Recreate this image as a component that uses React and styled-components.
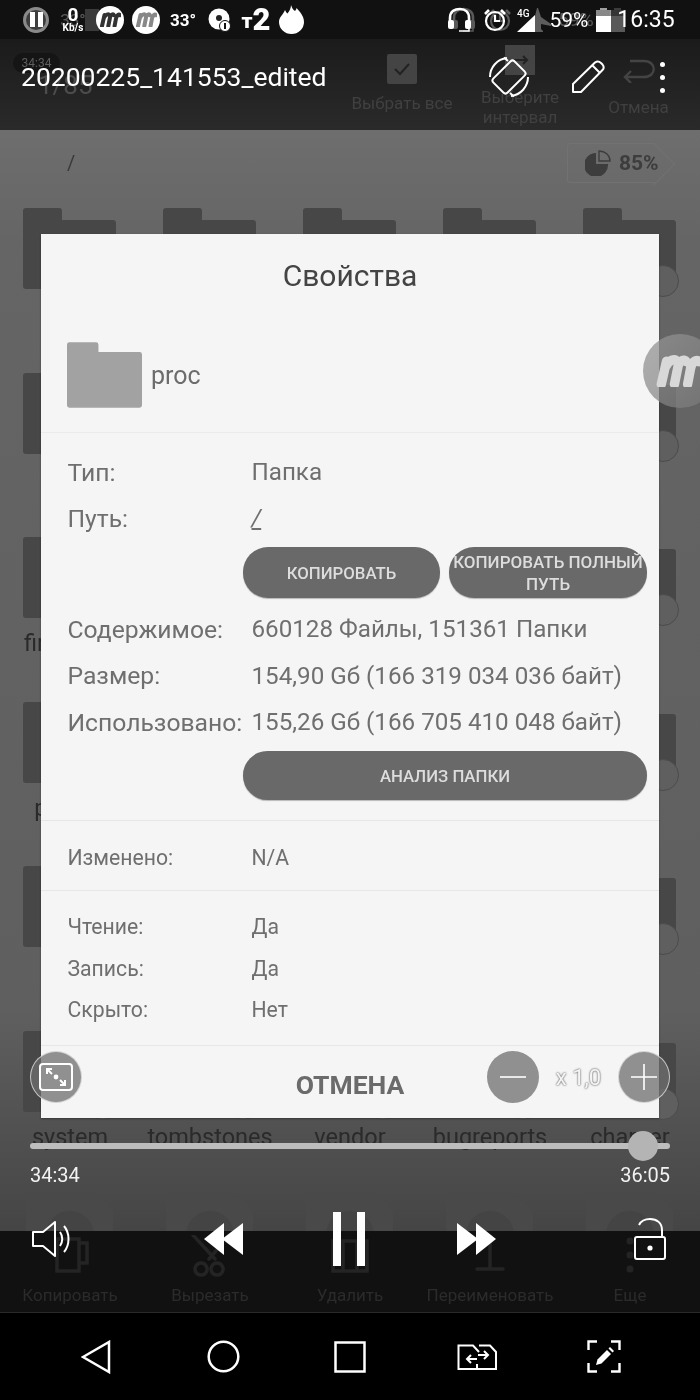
import React from 'react';
import styled, { createGlobalStyle } from 'styled-components';

const GlobalStyle = createGlobalStyle`
  html, body { margin: 0; padding: 0; background: #000; }
  body { font-family: Roboto, "Liberation Sans", sans-serif; }
  * { box-sizing: border-box; }
`;

const Screen = styled.div`
  position: relative;
  width: 700px;
  height: 1400px;
  overflow: hidden;
  display: flex;
  flex-direction: column;
  background: #000;
  filter: blur(0.45px);
`;

/* ---------- status bar ---------- */
const StatusBar = styled.div`
  height: 39px;
  flex: none;
  display: flex;
  align-items: center;
  background: #111;
  color: #fff;
`;

const GhostStatusItem = styled.div`
  width: ${p => p.$w}px;
  margin-left: ${p => p.$gap}px;
  flex: none;
  display: flex;
  justify-content: center;
  align-items: center;
  font-size: ${p => p.$size || 17}px;
  white-space: nowrap;
  opacity: ${p => p.$dim || 0.3};
`;

const GhostSquare = styled.div`
  width: 14px;
  height: 22px;
  background: #9a9a9a;
`;

/* ---------- file manager behind the dialog ---------- */
const AppToolbar = styled.div`
  height: 91px;
  flex: none;
  position: relative;
  display: flex;
  background: linear-gradient(#1b1b1b, #2a2a2a);
`;

const GhostCounter = styled.div`
  width: 345px;
  padding: 14px 0 0 13px;
  flex: none;
`;

const GhostPill = styled.div`
  width: 47px;
  height: 20px;
  border-radius: 10px;
  background: #151515;
  color: #5d5d5d;
  font-size: 12px;
  line-height: 20px;
  text-align: center;
`;

const GhostCount = styled.div`
  margin: 0 0 0 25px;
  font-size: 26px;
  line-height: 30px;
  color: #4c4c4c;
  transform: translateY(-3px);
`;

const GhostAction = styled.div`
  width: ${p => p.$w}px;
  flex: none;
  display: flex;
  flex-direction: column;
  align-items: center;
  padding-top: ${p => p.$top}px;
  font-size: 17px;
  line-height: 20px;
  text-align: center;
  color: #404040;
`;

const GhostCaption = styled.div`
  margin-top: ${p => p.$top}px;
`;

const Content = styled.div`
  flex: none;
  height: 1101px;
  overflow: hidden;
  background: linear-gradient(#6e6e6e 0, #656565 10%, #5f5f5f 80%, #454545 100%);
`;

const PathRow = styled.div`
  height: 78px;
  display: flex;
  justify-content: space-between;
  padding: 13px 45px 0 67px;
  color: #3a3a3a;
  font-size: 20px;
`;

const PathText = styled.span`
  margin-top: 8px;
`;

const StorageTag = styled.div`
  position: relative;
  width: 88px;
  height: 40px;
  display: flex;
  align-items: center;
  gap: 8px;
  padding-left: 17px;
  color: #3d3d3d;
  font-size: 21px;
  font-weight: 700;
  white-space: nowrap;
  border: 1px solid #727272;
  border-right: 0;
  border-radius: 3px 0 0 3px;
  &::after {
    content: '';
    position: absolute;
    right: -14px;
    top: 4.5px;
    width: 29px;
    height: 29px;
    transform: rotate(45deg);
    border-top: 1px solid #727272;
    border-right: 1px solid #727272;
  }
`;

const FolderGrid = styled.div`
  display: grid;
  grid-template-columns: repeat(5, 140px);
  grid-auto-rows: 164.6px;
  padding-left: 23px;
`;

const FolderCell = styled.div`
  position: relative;
  width: 93px;
`;

const FileCell = styled.div`
  margin: -3px 0 0 3px;
`;

const FolderLabel = styled.div`
  width: 140px;
  margin-left: -23px;
  text-align: center;
  font-size: 23.5px;
  line-height: 28px;
  margin-top: 11px;
  color: #2a2a2a;
  white-space: nowrap;
`;

const SelectCircle = styled.div`
  position: absolute;
  left: 64px;
  top: 57px;
  width: 32px;
  height: 32px;
  border-radius: 50%;
  background: #5f5f5f;
  border: 1px solid #4c4c4c;
`;

const ActionBar = styled.div`
  flex: none;
  height: 82px;
  display: grid;
  grid-template-columns: repeat(5, 140px);
  background: #111;
  border-bottom: 1px solid #2a2a2a;
`;

const ActionItem = styled.div`
  display: flex;
  flex-direction: column;
  align-items: center;
  color: #2b2b2b;
  font-size: 17px;
  line-height: 20px;
`;

const ActionIcon = styled.div`
  height: 54px;
  display: flex;
  align-items: flex-start;
  padding-top: 4px;
`;

const NavBar = styled.div`
  flex: 1;
  display: grid;
  grid-template-columns: repeat(5, 127px);
  justify-content: center;
  align-items: center;
  padding: 0 32px 0 32px;
  background: #000;
`;

const NavSlot = styled.div`
  display: flex;
  justify-content: center;
`;

/* ---------- properties dialog ---------- */
const Dialog = styled.div`
  position: absolute;
  left: 41px;
  top: 234px;
  width: 618px;
  height: 884px;
  display: flex;
  flex-direction: column;
  background: #f5f5f5;
  box-shadow: 0 1px 2px rgba(0, 0, 0, 0.35);
`;

const DialogTitle = styled.div`
  height: 82px;
  flex: none;
  display: flex;
  align-items: center;
  justify-content: center;
  font-size: 30px;
  color: #444;
`;

const FileRow = styled.div`
  height: 117px;
  flex: none;
  display: flex;
  gap: 9px;
  padding: 26px 0 0 26px;
  font-size: 25px;
  color: #6c6c6c;
  border-bottom: 1px solid #ebebeb;
`;

const FileName = styled.div`
  line-height: 68px;
`;

const Section = styled.div`
  flex: none;
  height: ${p => p.$h}px;
  padding-top: ${p => p.$top}px;
  border-bottom: 1px solid #e6e6e6;
`;

const PropRow = styled.div`
  height: ${p => p.$h}px;
  display: grid;
  grid-template-columns: 184px 1fr;
  align-items: center;
  padding-left: 26.5px;
  font-size: ${p => p.$size}px;
  color: #6f6f6f;
  white-space: nowrap;
`;

const WideLabel = styled.span`
  font-size: 24.7px;
`;

const PathLink = styled.span`
  text-decoration: underline;
  font-style: italic;
`;

const ButtonRow = styled.div`
  display: grid;
  grid-template-columns: ${p => p.$cols};
  gap: 9px;
  margin: ${p => p.$margin};
  padding: 0 12px 0 202px;
`;

const PillButton = styled.div`
  height: ${p => p.$h}px;
  display: flex;
  align-items: center;
  justify-content: center;
  border-radius: 25px;
  background: #696969;
  color: #ddd;
  font-size: ${p => p.$size}px;
  font-weight: 500;
  line-height: 22px;
  text-align: center;
  box-shadow: 0 1px 1px rgba(0, 0, 0, 0.25);
`;

const DialogFooter = styled.div`
  flex: 1;
  display: flex;
  align-items: center;
  justify-content: center;
  padding-top: 5px;
  color: #6b6b6b;
  font-size: 26.5px;
  font-weight: 700;
`;

/* ---------- floating bubble ---------- */
const Bubble = styled.div`
  position: absolute;
  left: 643px;
  top: 334px;
  width: 74px;
  height: 74px;
  display: flex;
  align-items: center;
  padding-left: 12px;
  border-radius: 50%;
  background: linear-gradient(135deg, rgba(150, 150, 150, 0.75), rgba(120, 120, 120, 0.7));
`;

/* ---------- video player overlay ---------- */
const Player = styled.div`
  position: absolute;
  inset: 0;
  display: flex;
  flex-direction: column;
  color: #fff;
`;

const PlayerStatus = styled.div`
  height: 39px;
  flex: none;
  display: flex;
  justify-content: space-between;
  align-items: center;
  padding: 0 25px 0 23px;
`;

const StatusGroup = styled.div`
  display: flex;
  align-items: center;
`;

const StatusSlot = styled.div`
  position: relative;
  width: ${p => p.$w}px;
  margin-left: ${p => p.$gap || 0}px;
  flex: none;
  display: flex;
  justify-content: center;
  align-items: center;
`;

const NetSpeed = styled.div`
  display: flex;
  flex-direction: column;
  align-items: center;
  font-weight: 700;
  font-size: 19px;
  line-height: 17px;
  small {
    font-size: 10px;
    line-height: 10px;
  }
`;

const StatusText = styled.div`
  font-size: ${p => p.$size}px;
  font-weight: ${p => p.$weight || 400};
  white-space: nowrap;
`;

const NetworkBadge = styled.span`
  position: absolute;
  left: 1px;
  top: 1px;
  font-size: 10px;
  line-height: 11px;
  font-weight: 500;
`;

const CarrierLogo = styled.div`
  display: flex;
  align-items: flex-end;
  font-weight: 900;
  line-height: 22px;
  font-size: 31px;
  span {
    font-size: 21px;
    line-height: 20px;
  }
`;

const LogoCircle = styled.div`
  width: 28px;
  height: 28px;
  display: flex;
  align-items: center;
  justify-content: center;
  border-radius: 50%;
  background: #fff;
`;

const PauseBadge = styled.div`
  width: 26px;
  height: 26px;
  display: flex;
  align-items: center;
  justify-content: center;
  gap: 3px;
  border-radius: 50%;
  background: #3e3e3e;
  border: 3px solid #8a8a8a;
  i {
    width: 5px;
    height: 15px;
    background: #fff;
  }
`;

const TitleRow = styled.div`
  height: 76px;
  flex: none;
  display: flex;
  align-items: center;
  padding: 0 0 0 21px;
`;

const VideoTitle = styled.div`
  width: 467px;
  flex: none;
  margin-bottom: 2px;
  font-size: 26.5px;
`;

const TitleIcons = styled.div`
  display: flex;
  align-items: center;
  gap: 41px;
`;

const Dots = styled.div`
  display: flex;
  flex-direction: column;
  gap: 8px;
  margin-left: 14px;
  i {
    width: 5px;
    height: 5px;
    border-radius: 50%;
    background: #fff;
  }
`;

const Spacer = styled.div`
  flex: 1;
`;

const SpeedRow = styled.div`
  flex: none;
  display: flex;
  align-items: center;
  padding: 0 30px;
  height: 52px;
`;

const RoundButton = styled.div`
  width: 52px;
  height: 52px;
  flex: none;
  display: flex;
  align-items: center;
  justify-content: center;
  border-radius: 50%;
  background: rgba(110, 110, 110, 0.75);
  border: ${p => (p.$ring ? '1px solid rgba(240, 240, 240, 0.7)' : '0')};
`;

const SpeedValue = styled.div`
  width: 79px;
  text-align: center;
  font-size: 22px;
  color: #f4f4f4;
  text-shadow: 0 0 2px #777, 0 0 2px #777;
`;

const SeekTrack = styled.div`
  position: relative;
  flex: none;
  height: 6px;
  margin: 40px 30px 0;
  border-radius: 3px;
  background: #bdbdbd;
`;

const SeekThumb = styled.div`
  position: absolute;
  top: -12px;
  width: 30px;
  height: 30px;
  margin-left: -15px;
  border-radius: 50%;
  background: #b4b4b4;
`;

const TimeRow = styled.div`
  flex: none;
  display: flex;
  justify-content: space-between;
  padding: 14px 30px 0;
  font-size: 20px;
  line-height: 24px;
  color: #f2f2f2;
`;

const ControlRow = styled.div`
  flex: none;
  height: 54px;
  margin-top: 25px;
  display: flex;
  align-items: center;
`;

const ControlSlot = styled.div`
  margin-left: ${p => p.$gap}px;
  flex: none;
  display: flex;
`;

const NavGap = styled.div`
  height: 134px;
  flex: none;
`;

/* ---------- drawings ---------- */
const FolderShape = ({ w = 93, h = 81, fill = '#474747' }) => (
  <svg width={w} height={h} viewBox="0 0 93 81" style={{ display: 'block' }}>
    <path
      d="M3 0H36a3 3 0 0 1 3 3V12H90a3 3 0 0 1 3 3V78a3 3 0 0 1-3 3H3a3 3 0 0 1-3-3V3a3 3 0 0 1 3-3Z"
      fill={fill}
    />
  </svg>
);

const MLogo = ({ color = '#333', w = 22, sw = 4 }) => (
  <svg width={w} height={w * 0.7} viewBox="0 0 22 15.4">
    <path
      d="M3 14 5.5 3M9.3 14 11 5.5C11.5 3 14 1.5 15 3.2M15.6 14 17 6.5C17.5 3.5 20 1.5 21 3.2M5.5 5C6.5 2.5 9.5 1.5 10.5 3.2"
      fill="none"
      stroke={color}
      strokeWidth={sw}
      strokeLinecap="round"
    />
  </svg>
);

const RotateIcon = () => (
  <svg width="42" height="42" viewBox="0 0 42 42" fill="none" stroke="#fff" strokeWidth="2">
    <rect x="11" y="6" width="20" height="30" rx="3" transform="rotate(45 21 21)" />
    <path d="M2 21A19 19 0 0 1 19 2M23 40A19 19 0 0 0 40 21" />
    <path d="M16 1.5 20 5M26 40.5 22 37" />
  </svg>
);

const PencilIcon = () => (
  <svg width="34" height="34" viewBox="0 0 34 34" fill="none" stroke="#fff" strokeWidth="2" strokeLinejoin="round">
    <path d="M2 32V24L24 2.5C26 1 28 1 30 3L31.5 4.5C33 6.5 33 8.5 31.5 10L10 32Z" />
    <path d="M21.5 5.5 28.5 12.5" />
  </svg>
);

const SpeakerIcon = () => (
  <svg width="42" height="38" viewBox="0 0 42 38" fill="none" stroke="#fff" strokeWidth="2" strokeLinejoin="round" style={{ display: 'block' }}>
    <path d="M2 12V26H12L24 36V2L12 12Z" />
    <path d="M29 12C32 16 32 22 29 26" />
    <path d="M33 6C39 13 39 25 33 32" />
  </svg>
);

const SkipIcon = ({ flip }) => (
  <svg width="40" height="32" viewBox="0 0 40 32" fill="#fff" style={{ display: 'block', transform: flip ? 'scaleX(-1)' : 'none' }}>
    <path d="M0 16 20 0V32Z" />
    <path d="M18 16 39 0V32Z" />
  </svg>
);

const PauseIcon = () => (
  <svg width="32" height="54" viewBox="0 0 32 54" fill="#fff" style={{ display: 'block' }}>
    <rect x="0" y="0" width="8" height="54" />
    <rect x="24" y="0" width="8" height="54" />
  </svg>
);

const LockIcon = () => (
  <svg width="34" height="42" viewBox="0 0 34 42" fill="none" stroke="#fff" strokeWidth="2" style={{ display: 'block' }}>
    <path d="M6 7C8 3 12 1 17 1C24 1 29 5 29 12V19" />
    <rect x="2" y="19" width="30" height="22" rx="2" />
    <circle cx="17" cy="30" r="2.6" fill="#fff" stroke="none" />
  </svg>
);

const FitIcon = () => (
  <svg width="36" height="30" viewBox="0 0 36 30" fill="none" stroke="#fff" strokeWidth="2">
    <rect x="2" y="2" width="32" height="26" rx="3" />
    <path d="M9 7 14 12M9 12V7H14M27 23 22 18M27 18V23H22" />
    <circle cx="18" cy="15" r="2.4" fill="#fff" stroke="none" />
  </svg>
);

const MinusIcon = () => (
  <svg width="26" height="26" viewBox="0 0 26 26" stroke="#fff" strokeWidth="1.6">
    <path d="M0 13H26" />
  </svg>
);

const PlusIcon = () => (
  <svg width="26" height="26" viewBox="0 0 26 26" stroke="#fff" strokeWidth="1.6">
    <path d="M0 13H26M13 0V26" />
  </svg>
);

const BackIcon = () => (
  <svg width="30" height="34" viewBox="0 0 30 34" fill="none" stroke="#fff" strokeWidth="2.5" strokeLinejoin="miter">
    <path d="M2 17 28 2V32Z" />
  </svg>
);

const HomeIcon = () => (
  <svg width="33" height="33" viewBox="0 0 33 33" fill="none" stroke="#fff" strokeWidth="2.5">
    <circle cx="16.5" cy="16.5" r="14.8" />
  </svg>
);

const RecentIcon = () => (
  <svg width="32" height="32" viewBox="0 0 32 32" fill="none" stroke="#fff" strokeWidth="2.5">
    <rect x="1.5" y="1.5" width="29" height="29" />
  </svg>
);

const SwitchIcon = () => (
  <svg width="40" height="26" viewBox="0 0 40 26" fill="none" stroke="#fff" strokeWidth="2">
    <path d="M20 25H1.5V1.5H16L22 8M22 1.5H33L39 8V25H20V20" />
    <path d="M21 11H31M27 7 31 11 27 15M20 15H10M14 11 10 15 14 19" />
  </svg>
);

const ScreenEditIcon = () => (
  <svg width="34" height="33" viewBox="0 0 34 33" fill="none" stroke="#fff" strokeWidth="2.4">
    <path d="M10 1.5H1.5V10M24 1.5H32.5V10M10 31.5H1.5V23M24 31.5H32.5V23" />
    <path d="M9 25 10.5 19.5 20 10 24 14 14.5 23.5Z" fill="#fff" stroke="none" />
    <path d="M21.5 8.5 23 7 27 11 25.5 12.5Z" fill="#fff" stroke="none" />
  </svg>
);

const HeadsetIcon = () => (
  <svg width="26" height="26" viewBox="0 0 26 26" fill="none" stroke="#fff" strokeWidth="2.6">
    <path d="M3 16V11C3 4 8 2 13 2C18 2 22 5 22 11V16" />
    <rect x="1" y="13" width="6" height="9" rx="2" fill="#fff" stroke="none" />
    <rect x="18" y="13" width="6" height="9" rx="2" fill="#fff" stroke="none" />
    <path d="M12 24H22V21" strokeWidth="1.5" />
  </svg>
);

const AlarmIcon = () => (
  <svg width="24" height="24" viewBox="0 0 24 24" fill="none" stroke="#fff" strokeWidth="2.2">
    <circle cx="12" cy="13" r="9" />
    <path d="M12 7V13H17" />
    <path d="M2 6 6 2M22 6 18 2" strokeWidth="2.6" />
  </svg>
);

const SignalIcon = () => (
  <svg width="36" height="26" viewBox="0 0 36 26" fill="#fff">
    <path d="M1 25 19 8V25Z" />
    <path d="M19 25V9L21 1H22L25 10L35 17V19L25 17V22L27 24V25Z" opacity="0.32" />
  </svg>
);

const BatteryIcon = () => (
  <svg width="15" height="24" viewBox="0 0 15 24" fill="#fff">
    <rect x="4" y="0" width="7" height="2" opacity="0.6" />
    <rect x="0" y="2" width="15" height="6" opacity="0.5" />
    <rect x="0" y="8" width="15" height="16" />
  </svg>
);

const NoticeIcon = () => (
  <svg width="24" height="24" viewBox="0 0 24 24">
    <circle cx="11" cy="11" r="10.5" fill="#fff" />
    <circle cx="11" cy="10" r="3" fill="#222" />
    <circle cx="17" cy="18" r="5.5" fill="#fff" stroke="#111" strokeWidth="1" />
    <path d="M17 15V21" stroke="#111" strokeWidth="2" />
  </svg>
);

const FlameIcon = () => (
  <svg width="25" height="29" viewBox="0 0 25 29" fill="#fff">
    <path d="M12 0C13 3 14 5 16 6C17 5 17.5 4 17.5 3C21 7 25 11 25 17A12.5 12 0 0 1 0 17C0 12 4 10 6 5C7 7 7.5 8 8.5 8.5C10.5 6 12 3 12 0Z" />
  </svg>
);

const CheckBoxGhost = () => (
  <svg width="30" height="30" viewBox="0 0 30 30">
    <rect width="30" height="30" rx="2" fill="#444" />
    <path d="M8 15 13 20 22 10" fill="none" stroke="#222" strokeWidth="2" />
  </svg>
);

const IntervalGhost = () => (
  <svg width="30" height="30" viewBox="0 0 30 30">
    <rect width="30" height="30" fill="#444" />
    <path d="M8 15H22M18 11 22 15 18 19" fill="none" stroke="#222" strokeWidth="2" />
  </svg>
);

const UndoGhost = () => (
  <svg width="34" height="24" viewBox="0 0 34 24" fill="none" stroke="#444" strokeWidth="2.4">
    <path d="M3 18H22C35 18 35 2 22 2H8" />
    <path d="M9 12 3 18 9 24" />
  </svg>
);

const PieGhost = () => (
  <svg width="26" height="26" viewBox="0 0 26 26" fill="#3d3d3d" style={{ flex: 'none' }}>
    <path d="M11 3V14H23A12 12 0 1 1 11 3Z" />
    <path d="M14 1V11H25C25 5 20 1 14 1Z" fill="none" stroke="#3d3d3d" strokeWidth="1.4" />
  </svg>
);

const FileGhost = () => (
  <svg width="87" height="60" viewBox="0 0 87 60" style={{ display: 'block' }}>
    <path d="M3 0H69L87 18V60H0V3A3 3 0 0 1 3 0Z" fill="#494949" />
    <circle cx="44" cy="42" r="24" fill="#444" />
  </svg>
);

const ActionGhost = ({ kind }) => {
  const paths = {
    copy: 'M12 4H34V36H12ZM34 8H42V28H34',
    cut: 'M8 0 30 24M36 10 24 24M16 28a6 6 0 1 0 .1 0M32 28a6 6 0 1 0 .1 0',
    del: 'M8 6H42V36H8ZM18 6V36M32 6V36',
    name: 'M25 0V34M12 34H38',
    more: 'M25 6V6.1M25 20V20.1M25 34V34.1',
  };
  return (
    <svg width="50" height="44" viewBox="0 0 50 44" fill="none" stroke="#242424" strokeWidth={kind === 'more' ? 7 : 3.5} strokeLinecap="round">
      <path d={paths[kind]} />
    </svg>
  );
};

/* ---------- data ---------- */
const FOLDERS = [
  ...Array(10).fill(''),
  'firmware', '', '', '', '',
  'persist', '', '', '', '',
  ...Array(5).fill(''),
  'system', 'tombstones', 'vendor', 'bugreports', 'charger',
];

const ACTIONS = [
  { kind: 'copy', text: 'Копировать' },
  { kind: 'cut', text: 'Вырезать' },
  { kind: 'del', text: 'Удалить' },
  { kind: 'name', text: 'Переименовать' },
  { kind: 'more', text: 'Еще' },
];

const POSITION = 2074;
const DURATION = 2165;

const App = () => (
  <>
    <GlobalStyle />
    <Screen>
      <StatusBar>
        <GhostStatusItem $w={26} $gap={60}>33°</GhostStatusItem>
        <GhostStatusItem $w={14} $gap={-1}><GhostSquare /></GhostStatusItem>
        <GhostStatusItem $w={26} $gap={352}><HeadsetIcon /></GhostStatusItem>
        <GhostStatusItem $w={24} $gap={11}><AlarmIcon /></GhostStatusItem>
        <GhostStatusItem $w={38} $gap={45} $size={19}>59%</GhostStatusItem>
        <GhostStatusItem $w={15} $gap={15}><BatteryIcon /></GhostStatusItem>
      </StatusBar>
      <AppToolbar>
        <GhostCounter>
          <GhostPill>34:34</GhostPill>
          <GhostCount>1/85</GhostCount>
        </GhostCounter>
        <GhostAction $w={114} $top={15}>
          <CheckBoxGhost />
          <GhostCaption $top={9}>Выбрать все</GhostCaption>
        </GhostAction>
        <GhostAction $w={122} $top={6}>
          <IntervalGhost />
          <GhostCaption $top={12}>Выберите<br />интервал</GhostCaption>
        </GhostAction>
        <GhostAction $w={115} $top={20}>
          <UndoGhost />
          <GhostCaption $top={14}>Отмена</GhostCaption>
        </GhostAction>
      </AppToolbar>
      <Content>
        <PathRow>
          <PathText>/</PathText>
          <StorageTag>
            <PieGhost />
            85%
          </StorageTag>
        </PathRow>
        <FolderGrid>
          {FOLDERS.map((name, i) => (
            <FolderCell key={i}>
              <FolderShape />
              <SelectCircle />
              {name && <FolderLabel>{name}</FolderLabel>}
            </FolderCell>
          ))}
          {ACTIONS.map(a => (
            <FileCell key={a.kind}>
              <FileGhost />
            </FileCell>
          ))}
        </FolderGrid>
      </Content>
      <ActionBar>
        {ACTIONS.map(a => (
          <ActionItem key={a.kind}>
            <ActionIcon>
              <ActionGhost kind={a.kind} />
            </ActionIcon>
            {a.text}
          </ActionItem>
        ))}
      </ActionBar>
      <NavBar>
        <NavSlot><BackIcon /></NavSlot>
        <NavSlot><HomeIcon /></NavSlot>
        <NavSlot><RecentIcon /></NavSlot>
        <NavSlot><SwitchIcon /></NavSlot>
        <NavSlot><ScreenEditIcon /></NavSlot>
      </NavBar>

      <Dialog>
        <DialogTitle>Свойства</DialogTitle>
        <FileRow>
          <FolderShape w={75} h={66} fill="#a2a2a2" />
          <FileName>proc</FileName>
        </FileRow>
        <Section $h={388} $top={16}>
          <PropRow $h={46} $size={24.2}>
            <WideLabel>Тип:</WideLabel>
            <span>Папка</span>
          </PropRow>
          <PropRow $h={46} $size={24.2}>
            <WideLabel>Путь:</WideLabel>
            <span><PathLink>/</PathLink></span>
          </PropRow>
          <ButtonRow $cols="197px 198px" $margin="6px 0 8px">
            <PillButton $h={51} $size={16.8}>КОПИРОВАТЬ</PillButton>
            <PillButton $h={51} $size={17}>КОПИРОВАТЬ ПОЛНЫЙ ПУТЬ</PillButton>
          </ButtonRow>
          <PropRow $h={46.5} $size={24.2}>
            <WideLabel>Содержимое:</WideLabel>
            <span>660128 Файлы, 151361 Папки</span>
          </PropRow>
          <PropRow $h={46.5} $size={24.2}>
            <WideLabel>Размер:</WideLabel>
            <span>154,90 Gб (166 319 034 036 байт)</span>
          </PropRow>
          <PropRow $h={46.5} $size={24.2}>
            <WideLabel>Использовано:</WideLabel>
            <span>155,26 Gб (166 705 410 048 байт)</span>
          </PropRow>
          <ButtonRow $cols="1fr" $margin="5.5px 0 0">
            <PillButton $h={49} $size={16.8}>АНАЛИЗ ПАПКИ</PillButton>
          </ButtonRow>
        </Section>
        <Section $h={70} $top={13}>
          <PropRow $h={46} $size={21.2}>
            <span>Изменено:</span>
            <span>N/A</span>
          </PropRow>
        </Section>
        <Section $h={155} $top={15}>
          <PropRow $h={41.5} $size={21.2}>
            <span>Чтение:</span>
            <span>Да</span>
          </PropRow>
          <PropRow $h={41.5} $size={21.2}>
            <span>Запись:</span>
            <span>Да</span>
          </PropRow>
          <PropRow $h={41.5} $size={21.2}>
            <span>Скрыто:</span>
            <span>Нет</span>
          </PropRow>
        </Section>
        <DialogFooter>ОТМЕНА</DialogFooter>
      </Dialog>

      <Bubble>
        <MLogo color="#d8d8d8" w={46} sw={4.5} />
      </Bubble>

      <Player>
        <PlayerStatus>
          <StatusGroup>
            <StatusSlot $w={26}><PauseBadge><i /><i /></PauseBadge></StatusSlot>
            <StatusSlot $w={24} $gap={12}>
              <NetSpeed>0<small>Kb/s</small></NetSpeed>
            </StatusSlot>
            <StatusSlot $w={28} $gap={11}><LogoCircle><MLogo /></LogoCircle></StatusSlot>
            <StatusSlot $w={28} $gap={8}><LogoCircle><MLogo color="#888" /></LogoCircle></StatusSlot>
            <StatusSlot $w={28} $gap={9}>
              <StatusText $size={17} $weight={700}>33°</StatusText>
            </StatusSlot>
            <StatusSlot $w={24} $gap={11}><NoticeIcon /></StatusSlot>
            <StatusSlot $w={30} $gap={9}>
              <CarrierLogo><span>т</span>2</CarrierLogo>
            </StatusSlot>
            <StatusSlot $w={25} $gap={8}><FlameIcon /></StatusSlot>
          </StatusGroup>
          <StatusGroup>
            <StatusSlot $w={26}><HeadsetIcon /></StatusSlot>
            <StatusSlot $w={24} $gap={10}><AlarmIcon /></StatusSlot>
            <StatusSlot $w={36} $gap={9}>
              <NetworkBadge>4G</NetworkBadge>
              <SignalIcon />
            </StatusSlot>
            <StatusSlot $w={40} $gap={-3}>
              <StatusText $size={21}>59%</StatusText>
            </StatusSlot>
            <StatusSlot $w={15} $gap={7}><BatteryIcon /></StatusSlot>
            <StatusSlot $w={58} $gap={6}>
              <StatusText $size={23}>16:35</StatusText>
            </StatusSlot>
          </StatusGroup>
        </PlayerStatus>
        <TitleRow>
          <VideoTitle>20200225_141553_edited</VideoTitle>
          <TitleIcons>
            <RotateIcon />
            <PencilIcon />
            <Dots><i /><i /><i /></Dots>
          </TitleIcons>
        </TitleRow>
        <Spacer />
        <SpeedRow>
          <RoundButton $ring><FitIcon /></RoundButton>
          <Spacer />
          <RoundButton><MinusIcon /></RoundButton>
          <SpeedValue>x 1,0</SpeedValue>
          <RoundButton $ring><PlusIcon /></RoundButton>
        </SpeedRow>
        <SeekTrack>
          <SeekThumb style={{ left: `${(POSITION / DURATION) * 100}%` }} />
        </SeekTrack>
        <TimeRow>
          <span>34:34</span>
          <span>36:05</span>
        </TimeRow>
        <ControlRow>
          <ControlSlot $gap={31}><SpeakerIcon /></ControlSlot>
          <ControlSlot $gap={131}><SkipIcon /></ControlSlot>
          <ControlSlot $gap={89}><PauseIcon /></ControlSlot>
          <ControlSlot $gap={91}><SkipIcon flip /></ControlSlot>
          <ControlSlot $gap={137}><LockIcon /></ControlSlot>
        </ControlRow>
        <NavGap />
      </Player>
    </Screen>
  </>
);

export default App;
